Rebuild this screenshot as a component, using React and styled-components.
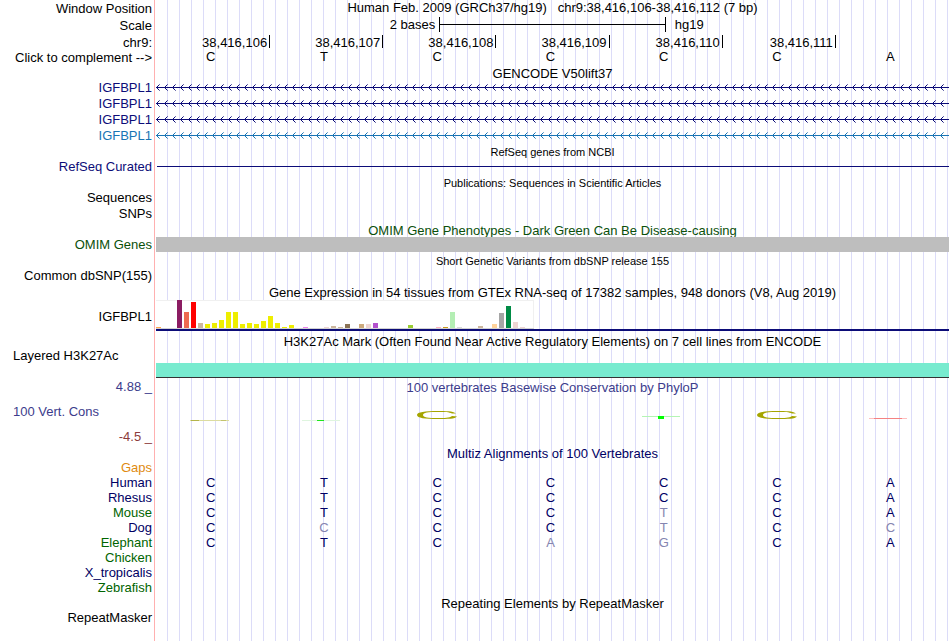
import React from 'react';
import styled, { createGlobalStyle } from 'styled-components';

const GlobalStyle = createGlobalStyle`
  body {
    margin: 0;
    background: #fff;
    color: #000;
    font-family: 'Liberation Sans', Arial, sans-serif;
    font-size: 13px;
  }
`;

// Guide lines every 12px, hidden behind the label column
const Browser = styled.main`
  min-height: 100vh;
  box-sizing: border-box;
  padding-right: 1px;
  background-color: #fff;
  background-image:
    linear-gradient(#ffb0b0, #ffb0b0),
    linear-gradient(#fff, #fff),
    linear-gradient(to right, #dcdcf8 1px, transparent 1px);
  background-size: 1px 100%, 156px 100%, 12px 100%;
  background-position: 154px 0, 0 0, 11px 0;
  background-repeat: no-repeat, no-repeat, repeat;
`;

const Row = styled.div`
  display: grid;
  grid-template-columns: 152px minmax(0, 1fr);
  column-gap: 4px;
  height: ${(props) => props.$height || 15}px;
  line-height: ${(props) => props.$height || 15}px;
  color: ${(props) => props.$color || '#000'};
  white-space: nowrap;
`;

const Label = styled.div`
  grid-column: 1;
  text-align: ${(props) => (props.$left ? 'left' : 'right')};
  padding-left: 13px;
  line-height: ${(props) => props.$line || 'inherit'};
  color: ${(props) => props.$color || 'inherit'};
`;

const Title = styled.div`
  grid-column: 2;
  padding-top: ${(props) => (props.$first ? 0 : 1)}px;
  line-height: ${(props) => (props.$first ? '15px' : 'inherit')};
  text-align: center;
  font-size: ${(props) => (props.$small ? 11 : 13)}px;
  white-space: pre;
  overflow: ${(props) => (props.$clip ? 'hidden' : 'visible')};
`;

const ScaleBar = styled.div`
  display: grid;
  grid-template-columns: 1fr calc(100% * 2 / 7) 1fr;
  line-height: 15px;
`;

const ScaleText = styled.span`
  text-align: ${(props) => (props.$end ? 'left' : 'right')};
  padding: ${(props) => (props.$end ? '0 0 0 9px' : '0 4px 0 0')};
`;

const ScaleLine = styled.div`
  height: 15px;
  box-sizing: border-box;
  border: solid #000;
  border-width: 0 1px;
  background: linear-gradient(#000, #000) 0 7px / 100% 1px no-repeat;
`;

const Ruler = styled.div`
  display: grid;
  grid-template-columns: repeat(7, 1fr);
  padding-left: 1px;
`;

const Tick = styled.span`
  height: 13px;
  margin-top: 1px;
  line-height: 16px;
  text-align: right;
  padding-right: 2px;
  border-right: 1px solid ${(props) => (props.$last ? 'transparent' : '#000')};
`;

const Bases = styled.div`
  display: grid;
  grid-template-columns: repeat(7, 1fr);
  text-align: center;
  line-height: ${(props) => props.$line || 'inherit'};
`;

const Base = styled.span`
  padding-right: 4px;
  color: ${(props) => (props.$faded ? '#8585b0' : 'inherit')};
`;

const Strand = styled.svg`
  display: block;
  width: 100%;
  height: 16px;
`;

const ThinLine = styled.div`
  height: 1px;
  margin: 7px 0 0 1px;
  background: #0c0c78;
`;

const GreyBar = styled.div`
  background: #bebebe;
`;

const Expression = styled.div`
  height: 29px;
  border-bottom: 2px solid #0c0c78;
`;

const ExpressionChart = styled.svg`
  display: block;
`;

const Signal = styled.div`
  height: 14px;
  margin-top: 13px;
  background: #78ebcf;
  border-bottom: 1px solid #333;
`;

const ScoreLabels = styled.div`
  display: flex;
  flex-direction: column;
  justify-content: space-between;
  box-sizing: border-box;
  height: 67px;
  padding-top: 1px;
  line-height: 16px;
`;

const Conservation = styled.div`
  line-height: 18px;
`;

const Logos = styled(Bases)`
  line-height: 0;
`;

const NAVY = '#0c0c78';
const DARK = '#000064';
const GREEN = '#0a500a';
const SPECIES_GREEN = '#006400';

const ticks = [106, 107, 108, 109, 110, 111];

const genes = [
  { id: 'g1', color: NAVY },
  { id: 'g2', color: NAVY },
  { id: 'g3', color: NAVY },
  { id: 'g4', color: '#1874b4' },
];

// [tissue index, height, color]
const tissues = [
  [0, 1, '#ffa54f'], [3, 28, '#8b1c62'], [4, 16, '#ee6a50'], [5, 26, '#ff0000'],
  [6, 5, '#cdb79e'], [7, 4, '#eeee00'], [8, 5, '#eeee00'], [9, 8, '#eeee00'],
  [10, 16, '#eeee00'], [11, 16, '#eeee00'], [12, 4, '#eeee00'], [13, 5, '#eeee00'],
  [14, 4, '#eeee00'], [15, 7, '#eeee00'], [16, 12, '#eeee00'], [17, 5, '#eeee00'],
  [18, 1, '#eeee00'], [19, 3, '#eeee00'], [21, 1, '#ee82ee'], [24, 1, '#eed5d2'],
  [25, 2, '#cdb79e'], [26, 1, '#cdb79e'], [27, 4, '#8b7355'], [29, 4, '#cdaa7d'],
  [30, 4, '#eed5d2'], [31, 5, '#b452cd'], [36, 3, '#9acd32'], [40, 1, '#ffb6c1'],
  [41, 1, '#cd9b1d'], [42, 16, '#b4eeb4'], [43, 1, '#d9d9d9'], [46, 2, '#cdb79e'],
  [48, 4, '#ffd39b'], [49, 15, '#a6a6a6'], [50, 22, '#008b45'], [51, 6, '#eed5d2'],
  [52, 1, '#eed5d2'],
];

// Lower case letters are mismatches and are drawn faded
const alignments = [
  { name: 'Gaps', color: '#e08a10', bases: '' },
  { name: 'Human', color: DARK, bases: 'CTCCCCA' },
  { name: 'Rhesus', color: DARK, bases: 'CTCCCCA' },
  { name: 'Mouse', color: SPECIES_GREEN, bases: 'CTCCtCA' },
  { name: 'Dog', color: DARK, bases: 'CcCCtCc' },
  { name: 'Elephant', color: SPECIES_GREEN, bases: 'CTCagCA' },
  { name: 'Chicken', color: SPECIES_GREEN, bases: '' },
  { name: 'X_tropicalis', color: DARK, bases: '' },
  { name: 'Zebrafish', color: SPECIES_GREEN, bases: '' },
];

const Sequence = ({ bases, line }) => (
  <Bases $line={line}>
    {bases.split('').map((b, i) => (
      <Base key={i} $faded={b !== b.toUpperCase()}>{b.toUpperCase()}</Base>
    ))}
  </Bases>
);

const Gene = ({ id, color }) => (
  <Row $height={16} $color={color}>
    <Label>IGFBPL1</Label>
    <Strand>
      <defs>
        <pattern id={id} width="8" height="16" patternUnits="userSpaceOnUse">
          <path d="M1 6h1v1h-1z M2 5h1v1h-1z M1 8h1v1h-1z M2 9h1v1h-1z" fill={color} />
          <path d="M3 4h1v1h-1z M3 10h1v1h-1z" fill={color} opacity="0.6" />
        </pattern>
      </defs>
      <rect width="100%" height="16" fill={`url(#${id})`} />
      <rect y="7" width="100%" height="1" fill={color} />
    </Strand>
  </Row>
);

// Marks of the conservation track, one for each base
const Mark = ({ kind }) => (
  <svg width="42" height="46" viewBox="0 0 42 46" overflow="visible">
    {kind === 'olive-line' && (
      <>
        <rect x="0" y="23" width="39" height="1" fill="#dcdca0" />
        <rect x="1" y="23" width="8" height="1" fill="#b4b44b" />
        <rect x="31" y="23" width="5" height="1" fill="#c3c36e" />
      </>
    )}
    {kind === 'green-dash' && (
      <>
        <rect x="-1" y="23" width="38" height="1" fill="#dff5df" />
        <rect x="14" y="23" width="7" height="1" fill="#1ee61e" />
      </>
    )}
    {kind === 'ring' && (
      <path
        d="M40 16.5 C37 14 29 14 22 14 C9 14 1 15 1 18 C1 21 9 22 22 22 C32 22 39 22 41 19.5 L36 19 C33 21 29 21 22 21 C12 21 7 20.5 7 18 C7 15.5 12 15 22 15 C29 15 33 15 36 16.5 Z"
        fill="#a5a500"
      />
    )}
    {kind === 'green-block' && (
      <>
        <rect x="-1" y="19" width="38" height="1" fill="#b4f5b4" />
        <rect x="15" y="19" width="6" height="3" fill="#00ff00" />
      </>
    )}
    {kind === 'red-line' && (
      <>
        <rect x="0" y="21" width="38" height="1" fill="#ffbebe" />
        <rect x="5" y="21" width="28" height="1" fill="#f58282" />
      </>
    )}
  </svg>
);

const marks = ['olive-line', 'green-dash', 'ring', '', 'green-block', 'ring', 'red-line'];

const App = () => (
  <>
    <GlobalStyle />
    <Browser>
      <Row $height={17}>
        <Label>Window Position</Label>
        <Title $first>{'Human Feb. 2009 (GRCh37/hg19)   chr9:38,416,106-38,416,112 (7 bp)'}</Title>
      </Row>
      <Row $height={17}>
        <Label>Scale</Label>
        <ScaleBar>
          <ScaleText>2 bases</ScaleText>
          <ScaleLine />
          <ScaleText $end>hg19</ScaleText>
        </ScaleBar>
      </Row>
      <Row $height={16}>
        <Label $line="18px">chr9:</Label>
        <Ruler>
          {ticks.map((t) => <Tick key={t}>38,416,{t}</Tick>)}
          <Tick $last />
        </Ruler>
      </Row>
      <Row>
        <Label>Click to complement --&gt;</Label>
        <Sequence bases="CTCCCCA" line="13px" />
      </Row>

      <Row>
        <Title>GENCODE V50lift37</Title>
      </Row>
      {genes.map((gene) => <Gene key={gene.id} {...gene} />)}

      <Row>
        <Title $small>RefSeq genes from NCBI</Title>
      </Row>
      <Row $color={NAVY}>
        <Label>RefSeq Curated</Label>
        <ThinLine />
      </Row>

      <Row $height={16}>
        <Title $small>Publications: Sequences in Scientific Articles</Title>
      </Row>
      <Row $height={16}>
        <Label>Sequences</Label>
      </Row>
      <Row $height={16}>
        <Label>SNPs</Label>
      </Row>

      <Row $color={GREEN}>
        <Title $clip>OMIM Gene Phenotypes - Dark Green Can Be Disease-causing</Title>
      </Row>
      <Row $color={GREEN}>
        <Label>OMIM Genes</Label>
        <GreyBar />
      </Row>

      <Row $height={16}>
        <Title $small>Short Genetic Variants from dbSNP release 155</Title>
      </Row>
      <Row>
        <Label>Common dbSNP(155)</Label>
      </Row>

      <Row $height={17}>
        <Title>Gene Expression in 54 tissues from GTEx RNA-seq of 17382 samples, 948 donors (V8, Aug 2019)</Title>
      </Row>
      <Row $height={31}>
        <Label $line="33px">IGFBPL1</Label>
        <Expression>
          <ExpressionChart width="378" height="29">
            <rect width="378" height="29" fill="#f0f0f0" />
            <rect y="1" width="377" height="27" fill="#fff" />
            <rect y="28" width="378" height="1" fill="#d2d2d2" />
            {tissues.map(([i, h, color]) => (
              <rect key={i} x={i * 7} y={28 - h} width="5" height={h} fill={color} />
            ))}
          </ExpressionChart>
        </Expression>
      </Row>

      <Row $height={19}>
        <Title>H3K27Ac Mark (Often Found Near Active Regulatory Elements) on 7 cell lines from ENCODE</Title>
      </Row>
      <Row $height={28}>
        <Label $left $line="12px">Layered H3K27Ac</Label>
        <Signal />
      </Row>

      <Row $height={67} $color="#3c3c8c">
        <ScoreLabels>
          <Label>4.88 _</Label>
          <Label $left>100 Vert. Cons</Label>
          <Label $color="#8c3c3c">-4.5 _</Label>
        </ScoreLabels>
        <Conservation>
          <Title>100 vertebrates Basewise Conservation by PhyloP</Title>
          <Logos>
            {marks.map((kind, i) => (
              <Base key={i}><Mark kind={kind} /></Base>
            ))}
          </Logos>
        </Conservation>
      </Row>

      <Row $color={DARK}>
        <Title>Multiz Alignments of 100 Vertebrates</Title>
      </Row>
      {alignments.map(({ name, color, bases }) => (
        <Row key={name} $color={DARK}>
          <Label $color={color}>{name}</Label>
          <Sequence bases={bases} />
        </Row>
      ))}

      <Row>
        <Title>Repeating Elements by RepeatMasker</Title>
      </Row>
      <Row>
        <Label>RepeatMasker</Label>
      </Row>
    </Browser>
  </>
);

export default App;
